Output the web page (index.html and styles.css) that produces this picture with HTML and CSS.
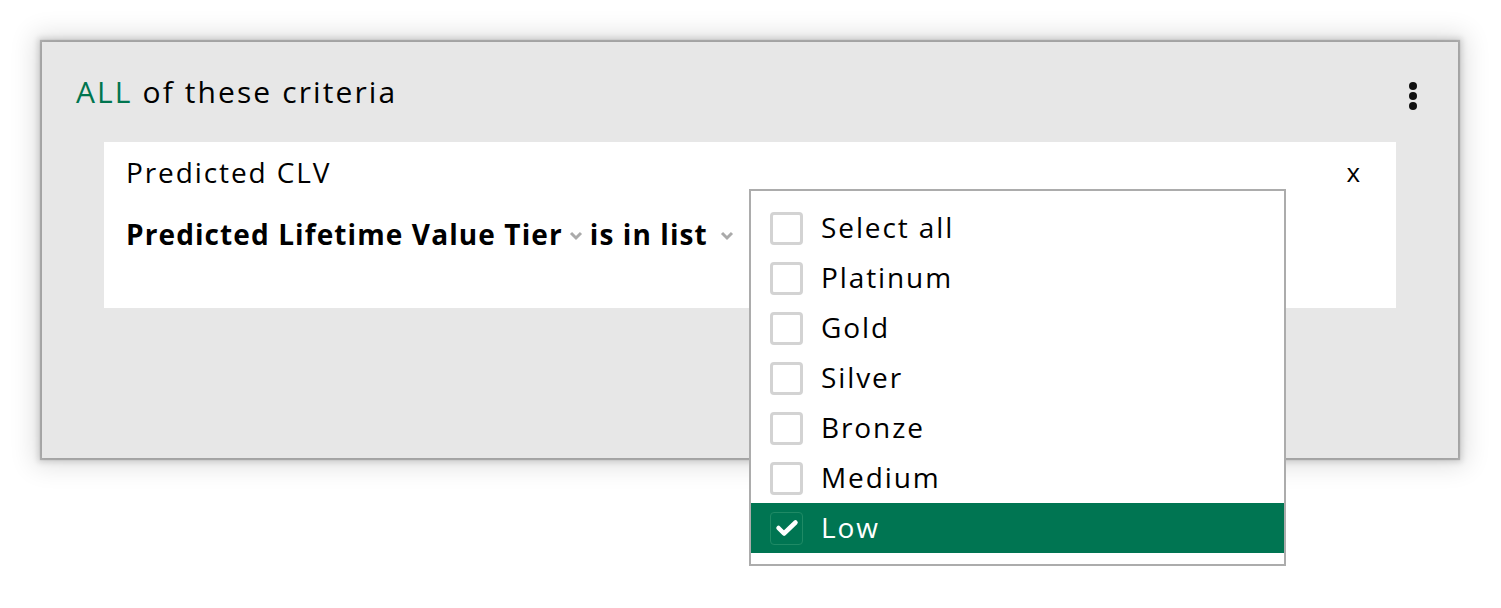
FILE: index.html
```html
<!DOCTYPE html>
<html>
<head>
<meta charset="utf-8">
<link rel="stylesheet" href="styles.css">
</head>
<body>
<div class="panel">
  <div class="panel-head">
    <div class="title"><span class="all">ALL</span> of these criteria</div>
    <svg class="kebab" width="10" height="28" viewBox="0 0 10 28"><circle cx="5" cy="4" r="4"/><circle cx="5" cy="14" r="4"/><circle cx="5" cy="24" r="4"/></svg>
  </div>
  <div class="card">
    <div class="card-head">
      <span class="card-title">Predicted CLV</span>
      <span class="close">x</span>
    </div>
    <div class="rule">
      <span class="field">Predicted Lifetime Value Tier</span>
      <svg class="chev" width="14" height="10" viewBox="0 0 14 10"><path d="M2 2 L7 7 L12 2" fill="none" stroke="#aaa" stroke-width="3"/></svg>
      <span class="op">is in list</span>
      <svg class="chev chev2" width="14" height="10" viewBox="0 0 14 10"><path d="M2 2 L7 7 L12 2" fill="none" stroke="#aaa" stroke-width="3"/></svg>
    </div>
  </div>
</div>
<div class="dropdown">
  <div class="opt"><span class="box"></span><span>Select all</span></div>
  <div class="opt"><span class="box"></span><span>Platinum</span></div>
  <div class="opt"><span class="box"></span><span>Gold</span></div>
  <div class="opt"><span class="box"></span><span>Silver</span></div>
  <div class="opt"><span class="box"></span><span>Bronze</span></div>
  <div class="opt"><span class="box"></span><span>Medium</span></div>
  <div class="opt selected"><span class="box checked"><svg width="24" height="20" viewBox="0 0 24 20"><path d="M3.5 10 L9 15.5 L20.5 4.5" fill="none" stroke="#fff" stroke-width="4.5" stroke-linecap="round" stroke-linejoin="round"/></svg></span><span>Low</span></div>
</div>
</body>
</html>
```

FILE: styles.css
```css
html, body {
  margin: 0;
  padding: 0;
  background: #fff;
  font-family: "Open Sans", "Liberation Sans", sans-serif;
  color: #000;
}
body {
  position: relative;
  width: 1501px;
  height: 608px;
  overflow: hidden;
}
.panel {
  margin: 42px 0 0 42px;
  width: 1416px;
  height: 416px;
  box-sizing: border-box;
  background: #e7e7e7;
  box-shadow: 0 0 1px 2px rgba(0,0,0,0.2), 0 0 6px 4px rgba(0,0,0,0.14), 0 0 24px 8px rgba(0,0,0,0.12);
  padding-top: 29px;
}
.panel-head {
  display: flex;
  justify-content: space-between;
  align-items: center;
  padding: 0 40px 0 34px;
  height: 40px;
}
.title {
  font-size: 30px;
  letter-spacing: 2.1px;
}
.all { color: #00754f; }
.kebab { fill: #111; margin-top: 10px; }
.card {
  margin: 31px 0 0 62px;
  width: 1292px;
  height: 166px;
  background: #fff;
  box-sizing: border-box;
  padding: 13px 36px 0 22px;
}
.card-head {
  display: flex;
  justify-content: space-between;
  align-items: center;
  height: 34px;
}
.card-title { font-size: 28px; letter-spacing: 1.9px; }
.close { font-size: 26px; }
.rule {
  display: flex;
  align-items: center;
  margin-top: 25px;
  height: 40px;
}
.field, .op {
  font-size: 28px;
  font-weight: 700;
  letter-spacing: 1.1px;
}
.chev { margin: 4px 7px 0 6px; }
.chev2 { margin-left: 12px; }
.dropdown {
  position: absolute;
  left: 749px;
  top: 189px;
  width: 537px;
  height: 377px;
  box-sizing: border-box;
  border: 2px solid #acacac;
  background: #fff;
  padding-top: 12px;
}
.opt {
  display: flex;
  align-items: center;
  height: 50px;
  padding-left: 19px;
  font-size: 28px;
  letter-spacing: 1.9px;
  line-height: 1;
}
.opt > span:last-child { margin-top: -2px; }
.box {
  width: 33px;
  height: 33px;
  box-sizing: border-box;
  border: 3px solid #d3d3d3;
  border-radius: 4px;
  margin-right: 18px;
  display: flex;
  align-items: center;
  justify-content: center;
}
.selected {
  background: #007552;
  color: #fff;
}
.box.checked {
  border: 1px solid #1f8a65;
}
```
